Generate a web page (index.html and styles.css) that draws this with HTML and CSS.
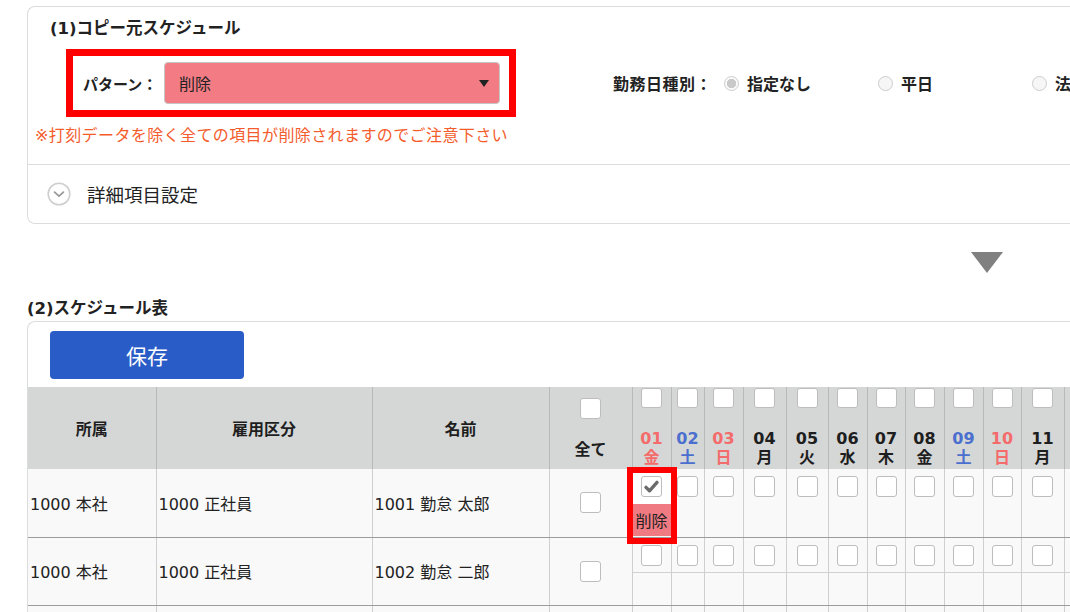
FILE: index.html
```html
<!DOCTYPE html>
<html lang="ja">
<head>
<meta charset="utf-8">
<title>スケジュールコピー</title>
<link rel="stylesheet" href="styles.css">
</head>
<body>
<div class="page">
  <section class="card card-top">
    <h2 class="sec-title">(1)コピー元スケジュール</h2>
    <div class="cond-row">
      <div class="pattern-box">
        <span class="lbl-pattern">パターン：</span>
        <div class="select"><span>削除</span><span class="caret"></span></div>
      </div>
      <div class="daytype">
        <span class="lbl-day">勤務日種別：</span>
        <label class="radio on"><span class="dot"></span>指定なし</label>
        <label class="radio"><span class="dot"></span>平日</label>
        <label class="radio"><span class="dot"></span>法定休日</label>
      </div>
    </div>
    <p class="warn">※打刻データを除く全ての項目が削除されますのでご注意下さい</p>
    <div class="detail">
      <svg class="detail-ico" width="24" height="24" viewBox="0 0 24 24"><circle cx="12" cy="12" r="10.8" fill="#fff" stroke="#cfcfcf" stroke-width="1.6"/><path d="M7.6 10.2 L12 14.2 L16.4 10.2" fill="none" stroke="#9a9a9a" stroke-width="1.8" stroke-linecap="round" stroke-linejoin="round"/></svg>
      <span>詳細項目設定</span>
    </div>
  </section>

  <div class="arrow"></div>

  <h2 class="sec-title2">(2)スケジュール表</h2>
  <section class="card card-table">
    <button class="save">保存</button>
    <div class="table-wrap">
      <table class="sched">
        <colgroup>
          <col class="w128"><col class="w216"><col class="w177"><col class="w83">
          <col class="w39"><col class="w33"><col class="w39"><col class="w43"><col class="w42"><col class="w39"><col class="w38"><col class="w39"><col class="w39"><col class="w38"><col class="w43"><col class="w40"><col class="w40">
        </colgroup>
        <thead>
          <tr>
            <th>所属</th>
            <th>雇用区分</th>
            <th>名前</th>
            <th class="all"><div class="cb hcb-all"></div><div class="all-t">全て</div></th>
            <th class="d"><div class="cb hcb"></div><div class="dn red">01</div><div class="dw red">金</div></th>
            <th class="d"><div class="cb hcb"></div><div class="dn blue">02</div><div class="dw blue">土</div></th>
            <th class="d"><div class="cb hcb"></div><div class="dn red">03</div><div class="dw red">日</div></th>
            <th class="d"><div class="cb hcb"></div><div class="dn">04</div><div class="dw">月</div></th>
            <th class="d"><div class="cb hcb"></div><div class="dn">05</div><div class="dw">火</div></th>
            <th class="d"><div class="cb hcb"></div><div class="dn">06</div><div class="dw">水</div></th>
            <th class="d"><div class="cb hcb"></div><div class="dn">07</div><div class="dw">木</div></th>
            <th class="d"><div class="cb hcb"></div><div class="dn">08</div><div class="dw">金</div></th>
            <th class="d"><div class="cb hcb"></div><div class="dn blue">09</div><div class="dw blue">土</div></th>
            <th class="d"><div class="cb hcb"></div><div class="dn red">10</div><div class="dw red">日</div></th>
            <th class="d"><div class="cb hcb"></div><div class="dn">11</div><div class="dw">月</div></th>
            <th class="d"><div class="cb hcb"></div><div class="dn">12</div><div class="dw">火</div></th>
            <th class="d"><div class="cb hcb"></div><div class="dn">13</div><div class="dw">水</div></th>
          </tr>
        </thead>
        <tbody>
          <tr class="r1">
            <td class="t">1000 本社</td>
            <td class="t">1000 正社員</td>
            <td class="t">1001 勤怠 太郎</td>
            <td class="c"><div class="cb"></div></td>
            <td class="dd"><div class="dc"><div class="dtop white"><div class="cb checked"><svg width="19" height="19" viewBox="0 0 19 19"><path d="M4 10.4 L7.5 13.8 L15 5.4" fill="none" stroke="#6b6b6b" stroke-width="3.4" stroke-linecap="round" stroke-linejoin="round"/></svg></div></div><div class="dbot del">削除</div><div class="hl"></div></div></td>
            <td class="dd"><div class="dc"><div class="dtop"><div class="cb"></div></div><div class="dbot"></div></div></td>
            <td class="dd"><div class="dc"><div class="dtop"><div class="cb"></div></div><div class="dbot"></div></div></td>
            <td class="dd"><div class="dc"><div class="dtop"><div class="cb"></div></div><div class="dbot"></div></div></td>
            <td class="dd"><div class="dc"><div class="dtop"><div class="cb"></div></div><div class="dbot"></div></div></td>
            <td class="dd"><div class="dc"><div class="dtop"><div class="cb"></div></div><div class="dbot"></div></div></td>
            <td class="dd"><div class="dc"><div class="dtop"><div class="cb"></div></div><div class="dbot"></div></div></td>
            <td class="dd"><div class="dc"><div class="dtop"><div class="cb"></div></div><div class="dbot"></div></div></td>
            <td class="dd"><div class="dc"><div class="dtop"><div class="cb"></div></div><div class="dbot"></div></div></td>
            <td class="dd"><div class="dc"><div class="dtop"><div class="cb"></div></div><div class="dbot"></div></div></td>
            <td class="dd"><div class="dc"><div class="dtop"><div class="cb"></div></div><div class="dbot"></div></div></td>
            <td class="dd"><div class="dc"><div class="dtop"><div class="cb"></div></div><div class="dbot"></div></div></td>
            <td class="dd"><div class="dc"><div class="dtop"><div class="cb"></div></div><div class="dbot"></div></div></td>
          </tr>
          <tr class="r2">
            <td class="t">1000 本社</td>
            <td class="t">1000 正社員</td>
            <td class="t">1002 勤怠 二郎</td>
            <td class="c"><div class="cb"></div></td>
            <td class="dd"><div class="dc"><div class="dtop"><div class="cb"></div></div><div class="dbot"></div></div></td>
            <td class="dd"><div class="dc"><div class="dtop"><div class="cb"></div></div><div class="dbot"></div></div></td>
            <td class="dd"><div class="dc"><div class="dtop"><div class="cb"></div></div><div class="dbot"></div></div></td>
            <td class="dd"><div class="dc"><div class="dtop"><div class="cb"></div></div><div class="dbot"></div></div></td>
            <td class="dd"><div class="dc"><div class="dtop"><div class="cb"></div></div><div class="dbot"></div></div></td>
            <td class="dd"><div class="dc"><div class="dtop"><div class="cb"></div></div><div class="dbot"></div></div></td>
            <td class="dd"><div class="dc"><div class="dtop"><div class="cb"></div></div><div class="dbot"></div></div></td>
            <td class="dd"><div class="dc"><div class="dtop"><div class="cb"></div></div><div class="dbot"></div></div></td>
            <td class="dd"><div class="dc"><div class="dtop"><div class="cb"></div></div><div class="dbot"></div></div></td>
            <td class="dd"><div class="dc"><div class="dtop"><div class="cb"></div></div><div class="dbot"></div></div></td>
            <td class="dd"><div class="dc"><div class="dtop"><div class="cb"></div></div><div class="dbot"></div></div></td>
            <td class="dd"><div class="dc"><div class="dtop"><div class="cb"></div></div><div class="dbot"></div></div></td>
            <td class="dd"><div class="dc"><div class="dtop"><div class="cb"></div></div><div class="dbot"></div></div></td>
          </tr>
          <tr class="r2">
            <td class="t">1000 本社</td>
            <td class="t">1000 正社員</td>
            <td class="t">1003 勤怠 三郎</td>
            <td class="c"><div class="cb"></div></td>
            <td class="dd"><div class="dc"><div class="dtop"><div class="cb"></div></div><div class="dbot"></div></div></td>
            <td class="dd"><div class="dc"><div class="dtop"><div class="cb"></div></div><div class="dbot"></div></div></td>
            <td class="dd"><div class="dc"><div class="dtop"><div class="cb"></div></div><div class="dbot"></div></div></td>
            <td class="dd"><div class="dc"><div class="dtop"><div class="cb"></div></div><div class="dbot"></div></div></td>
            <td class="dd"><div class="dc"><div class="dtop"><div class="cb"></div></div><div class="dbot"></div></div></td>
            <td class="dd"><div class="dc"><div class="dtop"><div class="cb"></div></div><div class="dbot"></div></div></td>
            <td class="dd"><div class="dc"><div class="dtop"><div class="cb"></div></div><div class="dbot"></div></div></td>
            <td class="dd"><div class="dc"><div class="dtop"><div class="cb"></div></div><div class="dbot"></div></div></td>
            <td class="dd"><div class="dc"><div class="dtop"><div class="cb"></div></div><div class="dbot"></div></div></td>
            <td class="dd"><div class="dc"><div class="dtop"><div class="cb"></div></div><div class="dbot"></div></div></td>
            <td class="dd"><div class="dc"><div class="dtop"><div class="cb"></div></div><div class="dbot"></div></div></td>
            <td class="dd"><div class="dc"><div class="dtop"><div class="cb"></div></div><div class="dbot"></div></div></td>
            <td class="dd"><div class="dc"><div class="dtop"><div class="cb"></div></div><div class="dbot"></div></div></td>
          </tr>
        </tbody>
      </table>
    </div>
  </section>
</div>
</body>
</html>
```

FILE: styles.css
```css
* { box-sizing: border-box; }
html, body { margin: 0; padding: 0; }
body {
  width: 1070px;
  height: 612px;
  overflow: hidden;
  background: #fff;
  color: #222;
  font-family: "DejaVu Sans", "Noto Sans CJK JP", sans-serif;
}
.page { padding: 6px 0 0 27px; width: 1400px; }

.card {
  border: 1px solid #dcdcdc;
  border-right: none;
  width: 1300px;
}
.card-top { border-radius: 8px 0 0 8px; padding-top: 10px; }
.sec-title {
  margin: 0 0 0 22px;
  font-size: 16.5px;
  font-weight: bold;
  line-height: 24px;
}
.cond-row {
  display: flex;
  align-items: center;
  margin: 8px 0 0 38px;
}
.pattern-box {
  flex: none;
  display: flex;
  align-items: center;
  width: 450px;
  border: 7px solid #ff0000;
  padding: 6px 9px;
}
.lbl-pattern {
  flex: none;
  width: 82px;
  padding-left: 1px;
  font-size: 15px;
  font-weight: bold;
}
.select {
  flex: none;
  width: 336px;
  height: 42px;
  background: #f27b84;
  border: 1px solid #c6c6c6;
  border-radius: 4px;
  display: flex;
  align-items: center;
  justify-content: space-between;
  padding: 0 10px 0 14px;
  font-size: 16px;
}
.caret {
  width: 0;
  height: 0;
  border-left: 5px solid transparent;
  border-right: 5px solid transparent;
  border-top: 7px solid #222;
}
.daytype {
  flex: none;
  display: flex;
  align-items: center;
  margin-left: 97px;
  font-size: 16px;
  font-weight: bold;
}
.lbl-day { width: 111px; flex: none; letter-spacing: 0.5px; }
.radio {
  flex: none;
  width: 154px;
  display: flex;
  align-items: center;
  gap: 8px;
}
.dot {
  width: 15px;
  height: 15px;
  border-radius: 50%;
  border: 1px solid #cdcdcd;
  background: #f6f6f6;
}
.radio.on .dot {
  background: radial-gradient(circle, #c9c9c9 0 4.4px, #fafafa 5px);
}
.warn {
  margin: 7px 0 0 7px;
  font-size: 16px;
  letter-spacing: 0.4px;
  line-height: 24px;
  color: #f45c2c;
}
.detail {
  margin-top: 16px;
  border-top: 1px solid #dcdcdc;
  height: 59px;
  display: flex;
  align-items: center;
  padding-left: 19px;
  gap: 16px;
  font-size: 18.5px;
}
.detail-ico { flex: none; }

.arrow {
  margin: 28px 0 0 944px;
  width: 0;
  height: 0;
  border-left: 16px solid transparent;
  border-right: 16px solid transparent;
  border-top: 21px solid #808080;
}
.sec-title2 {
  margin: 24px 0 0 0;
  font-size: 16.5px;
  font-weight: bold;
  line-height: 24px;
}
.card-table {
  border-bottom: none;
  border-radius: 8px 0 0 0;
  padding-top: 9px;
}
.save {
  display: block;
  margin-left: 22px;
  width: 194px;
  height: 48px;
  background: #2a5cc8;
  color: #fff;
  border: none;
  border-radius: 4px;
  font-family: "Noto Sans CJK JP", sans-serif;
  font-size: 21px;
}
.table-wrap { margin-top: 8px; }

.sched {
  border-collapse: collapse;
  table-layout: fixed;
  width: 1116px;
}
.w128 { width: 128px; }
.w216 { width: 216px; }
.w177 { width: 177px; }
.w83 { width: 83px; }
.w33 { width: 33px; }
.w38 { width: 38px; }
.w39 { width: 39px; }
.w40 { width: 40px; }
.w42 { width: 42px; }
.w43 { width: 43px; }

.sched th {
  background: #d5d7d6;
  border-left: 1px solid #b9b9b9;
  padding: 0;
  height: 82px;
  font-size: 16px;
  font-weight: bold;
  color: #1e1e1e;
}
.sched th:first-child { border-left: none; }
.sched th.all, .sched th.d { vertical-align: top; }

.cb {
  width: 21px;
  height: 21px;
  margin: 0 auto;
  border: 1px solid #bdbdbd;
  border-radius: 3px;
  background: #fff;
}
.hcb-all { margin-top: 11px; }
.all-t { margin-top: 21px; line-height: 20px; }
.hcb { height: 20px; margin-top: 1px; margin-bottom: 21px; }
.dn, .dw { line-height: 19px; }
.red { color: #f46b6b; }
.blue { color: #4a6fce; }

.sched td {
  background: #f9f9f9;
  border-left: 1px solid #cfcfcf;
  border-bottom: 1px solid #9c9c9c;
  padding: 0;
  height: 68px;
  font-size: 16px;
}
.sched td:first-child { border-left: none; }
.sched td.t { padding-left: 2px; vertical-align: middle; white-space: nowrap; }
.sched td.c { vertical-align: middle; }
.sched td.dd { vertical-align: top; }

.dc { position: relative; }
.dtop { height: 35px; padding-top: 7px; }
.dbot { height: 32px; }
.r2 .dtop { border-bottom: 1px solid #d2d2d2; }
.white { background: #fff; }
.del {
  background: #f07a82;
  display: flex;
  align-items: center;
  justify-content: center;
  font-family: "Noto Sans CJK JP", sans-serif;
  font-size: 16px;
}
.checked { display: flex; align-items: center; justify-content: center; }
.hl {
  position: absolute;
  left: -6px;
  right: -6px;
  top: -2px;
  bottom: -8px;
  border: 6px solid #ff0000;
  z-index: 2;
  pointer-events: none;
}
```
